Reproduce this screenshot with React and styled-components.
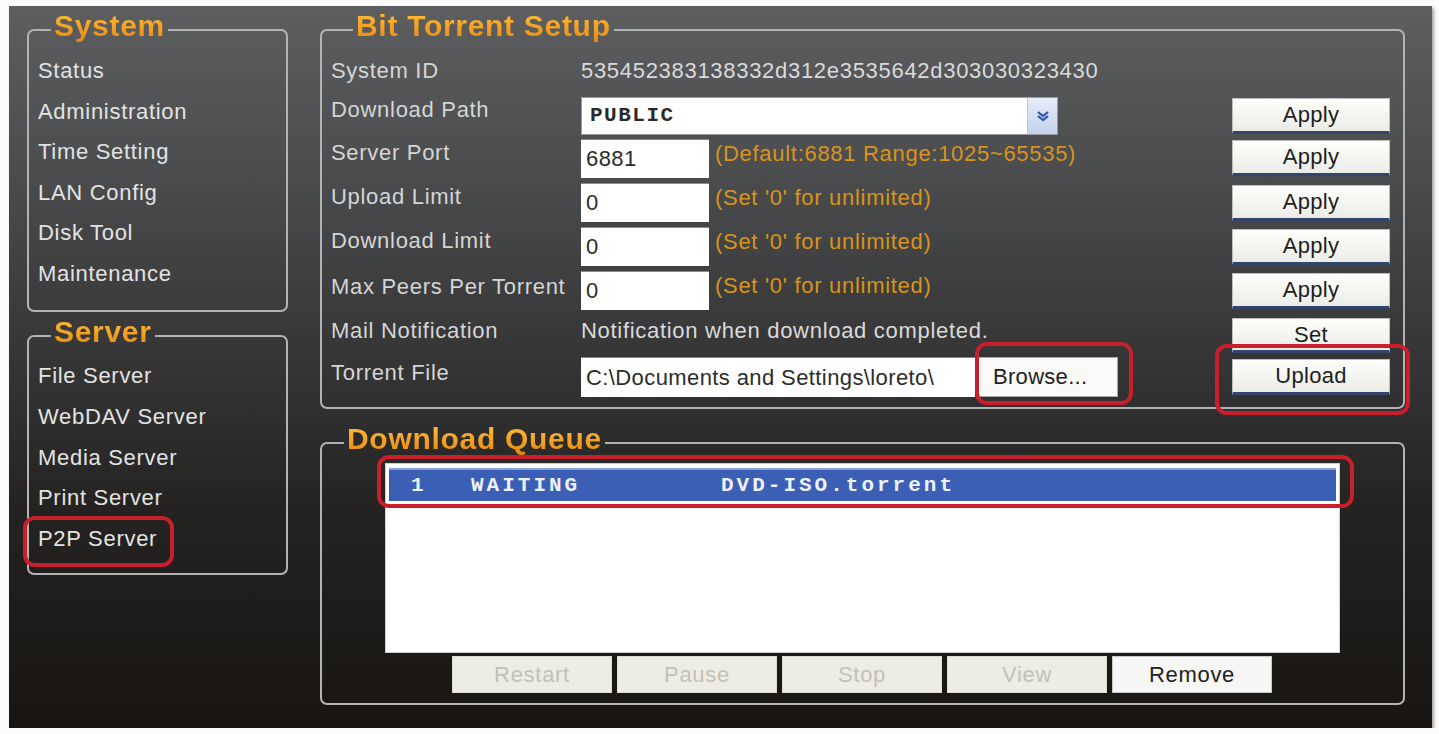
import React from "react";
import styled, { createGlobalStyle } from "styled-components";

const Global = createGlobalStyle`
  html, body {
    margin: 0;
    padding: 0;
    background: #fbfbfb;
  }
  body {
    font-family: "Liberation Sans", Arial, sans-serif;
  }
`;

const Panel = styled.div`
  box-sizing: border-box;
  width: 1423px;
  height: 722px;
  margin: 6px 0 0 9px;
  padding: 5px 27px 0 18px;
  display: flex;
  gap: 32px;
  background: linear-gradient(
    180deg,
    #5d5e60 0%,
    #4c4d4e 22%,
    #363637 48%,
    #242322 70%,
    #181512 100%
  );
  box-shadow: 2px 2px 3px rgba(0, 0, 0, 0.35);
  font-family: "Liberation Sans", Arial, sans-serif;
  letter-spacing: 0.7px;
`;

const Sidebar = styled.div`
  width: 261px;
  display: flex;
  flex-direction: column;
  gap: 5px;
`;

const Main = styled.div`
  flex: 1;
  display: flex;
  flex-direction: column;
  gap: 15px;
`;

const Group = styled.fieldset`
  margin: 0;
  min-width: 0;
  border: 2px solid #b3b3b3;
  border-radius: 7px;
  padding: ${(p) => p.$pad};
`;

const Legend = styled.legend`
  margin-left: ${(p) => p.$offset}px;
  padding: 0 3px 8px;
  font-size: 30px;
  line-height: 30px;
  font-weight: bold;
  letter-spacing: 0.7px;
  background: linear-gradient(180deg, #ffbd3c 0%, #f09a1c 55%, #d47e10 100%);
  -webkit-background-clip: text;
  background-clip: text;
  color: transparent;
`;

const Item = styled.div`
  padding-left: 9px;
  font-size: 22px;
  line-height: ${(p) => p.$lh}px;
  color: #e3e3e3;
  white-space: nowrap;
`;

const Marked = styled.span`
  position: relative;
  display: ${(p) => (p.$block ? "block" : "inline-block")};

  &::after {
    content: "";
    position: absolute;
    inset: ${(p) => p.$inset};
    border: 4px solid #c71f2b;
    border-radius: 12px;
    pointer-events: none;
  }
`;

const Row = styled.div`
  display: grid;
  grid-template-columns: 250px 1fr 158px;
  height: ${(p) => p.$h}px;
`;

const Label = styled.div`
  padding-top: ${(p) => p.$pt ?? 1}px;
  font-size: 22px;
  line-height: 28px;
  color: #d5d5d5;
  white-space: nowrap;
`;

const Value = styled.div`
  display: flex;
  align-items: flex-start;
  gap: ${(p) => p.$gap ?? 6}px;
  padding-top: ${(p) => p.$pt ?? 0}px;
  min-width: 0;
`;

const Plain = styled.div`
  padding-top: 1px;
  font-size: 22px;
  line-height: 28px;
  color: #dadada;
  white-space: nowrap;
`;

const Hint = styled(Plain)`
  color: #d8941c;
`;

const TextBox = styled.div`
  box-sizing: border-box;
  width: ${(p) => p.$w}px;
  height: ${(p) => p.$h ?? 39}px;
  padding: 0 5px;
  background: #fff;
  border-top: 1px solid #8a8a8a;
  font-size: 22px;
  line-height: ${(p) => (p.$h ?? 39) - 1}px;
  color: #2c2c2c;
  letter-spacing: 0.4px;
  white-space: nowrap;
  overflow: hidden;
`;

const Select = styled.div`
  box-sizing: border-box;
  width: 477px;
  height: 38px;
  margin-top: 2px;
  display: flex;
  background: #fff;
  border: 1px solid #9a9a9a;
`;

const SelectText = styled.div`
  flex: 1;
  padding-left: 8px;
  font-family: "Liberation Mono", "Courier New", monospace;
  font-weight: bold;
  font-size: 21px;
  line-height: 36px;
  letter-spacing: 1.5px;
  color: #2a2a2a;
`;

const Arrow = styled.div`
  width: 29px;
  display: flex;
  align-items: center;
  justify-content: center;
  background: linear-gradient(180deg, #e6edf9 0%, #c4d2ee 100%);
  border-left: 1px solid #b7c6e6;
`;

const Btn = styled.div`
  box-sizing: border-box;
  height: ${(p) => p.$h ?? 36}px;
  margin-top: ${(p) => p.$mt ?? 2}px;
  display: flex;
  align-items: center;
  justify-content: center;
  background: linear-gradient(180deg, #fdfdfb 0%, #ecece7 100%);
  border: 1px solid #bdbdbd;
  border-bottom: 3px solid #33456a;
  font-size: 22px;
  letter-spacing: 0.3px;
  color: #1e1e1e;
`;

const BrowseBtn = styled.div`
  box-sizing: border-box;
  width: 140px;
  height: 40px;
  padding-left: 14px;
  display: flex;
  align-items: center;
  background: #f9f9f7;
  border: 1px solid #a9a9a9;
  font-size: 22px;
  letter-spacing: 0.3px;
  color: #222;
`;

const ListBox = styled.div`
  box-sizing: border-box;
  width: 955px;
  height: 190px;
  margin: 0 auto;
  padding: 4px 3px 0;
  background: #fff;
  border: 1px solid #cfcfcf;
`;

const QueueRow = styled.div`
  box-sizing: border-box;
  height: 33px;
  padding-left: 22px;
  display: grid;
  grid-template-columns: 60px 250px 1fr;
  align-items: center;
  background: #3b5fb4;
  border-top: 2px solid #8ba3da;
  font-family: "Liberation Mono", "Courier New", monospace;
  font-weight: bold;
  font-size: 21px;
  letter-spacing: 3px;
  color: #eef2ff;
`;

const ButtonBar = styled.div`
  width: 955px;
  margin: 3px auto 0;
  padding-left: 67px;
  box-sizing: border-box;
  display: flex;
  gap: 5px;
`;

const QueueBtn = styled.div`
  box-sizing: border-box;
  width: 160px;
  height: 37px;
  display: flex;
  align-items: center;
  justify-content: center;
  background: ${(p) => (p.$disabled ? "#ededE3" : "#f6f6f4")};
  border: 1px solid ${(p) => (p.$disabled ? "#dcdcd2" : "#c8c8c8")};
  font-size: 22px;
  color: ${(p) => (p.$disabled ? "#c2c2b6" : "#222")};
`;

const systemItems = [
  "Status",
  "Administration",
  "Time Setting",
  "LAN Config",
  "Disk Tool",
  "Maintenance",
];

const serverItems = ["File Server", "WebDAV Server", "Media Server", "Print Server"];

const limits = [
  { label: "Upload Limit", pt: 0 },
  { label: "Download Limit", pt: 0 },
  { label: "Max Peers Per Torrent", pt: 2 },
];

const queueButtons = [
  { text: "Restart", disabled: true },
  { text: "Pause", disabled: true },
  { text: "Stop", disabled: true },
  { text: "View", disabled: true },
  { text: "Remove", disabled: false },
];

const Chevron = () => (
  <svg width="14" height="12" viewBox="0 0 14 12">
    <polyline points="2,2 7,6 12,2" fill="none" stroke="#2f55b0" strokeWidth="2.2" />
    <polyline points="2,6 7,10 12,6" fill="none" stroke="#2f55b0" strokeWidth="2.2" />
  </svg>
);

export default function App() {
  return (
    <>
      <Global />
      <Panel>
        <Sidebar>
          <Group $pad="2px 0 16px">
            <Legend $offset={22}>System</Legend>
            {systemItems.map((t) => (
              <Item key={t} $lh={40.5}>
                {t}
              </Item>
            ))}
          </Group>
          <Group $pad="1px 0 13px">
            <Legend $offset={22}>Server</Legend>
            {serverItems.map((t) => (
              <Item key={t} $lh={40.8}>
                {t}
              </Item>
            ))}
            <Item $lh={40.8}>
              <Marked $inset="-3px -17px -7px -15px">P2P Server</Marked>
            </Item>
          </Group>
        </Sidebar>

        <Main>
          <Group $pad="3px 13px 6px 9px">
            <Legend $offset={22}>Bit Torrent Setup</Legend>

            <Row $h={43}>
              <Label $pt={5}>System ID</Label>
              <Value $pt={4}>
                <Plain>535452383138332d312e3535642d303030323430</Plain>
              </Value>
              <div />
            </Row>

            <Row $h={44}>
              <Label>Download Path</Label>
              <Value>
                <Select>
                  <SelectText>PUBLIC</SelectText>
                  <Arrow>
                    <Chevron />
                  </Arrow>
                </Select>
              </Value>
              <Btn $h={36} $mt={3}>Apply</Btn>
            </Row>

            <Row $h={44}>
              <Label $pt={0}>Server Port</Label>
              <Value>
                <TextBox $w={128}>6881</TextBox>
                <Hint>(Default:6881 Range:1025~65535)</Hint>
              </Value>
              <Btn $mt={1}>Apply</Btn>
            </Row>

            {limits.map((l) => (
              <Row key={l.label} $h={44}>
                <Label $pt={l.pt}>{l.label}</Label>
                <Value>
                  <TextBox $w={128}>0</TextBox>
                  <Hint>(Set '0' for unlimited)</Hint>
                </Value>
                <Btn>Apply</Btn>
              </Row>
            ))}

            <Row $h={42}>
              <Label $pt={2}>Mail Notification</Label>
              <Value $pt={1}>
                <Plain>Notification when download completed.</Plain>
              </Value>
              <Btn $h={35} $mt={3}>Set</Btn>
            </Row>

            <Row $h={44}>
              <Label $pt={2}>Torrent File</Label>
              <Value $gap={3}>
                <TextBox $w={394} $h={40}>
                  C:\Documents and Settings\loreto\
                </TextBox>
                <Marked $inset="-15px -15px -8px -3px">
                  <BrowseBtn>Browse...</BrowseBtn>
                </Marked>
              </Value>
              <Marked $block $inset="-13px -20px -14px -17px">
                <Btn>Upload</Btn>
              </Marked>
            </Row>
          </Group>

          <Group $pad="1px 0 10px">
            <Legend $offset={22}>Download Queue</Legend>
            <ListBox>
              <Marked $block $inset="-13px -18px -7px -12px">
                <QueueRow>
                  <span>1</span>
                  <span>WAITING</span>
                  <span>DVD-ISO.torrent</span>
                </QueueRow>
              </Marked>
            </ListBox>
            <ButtonBar>
              {queueButtons.map((b) => (
                <QueueBtn key={b.text} $disabled={b.disabled}>
                  {b.text}
                </QueueBtn>
              ))}
            </ButtonBar>
          </Group>
        </Main>
      </Panel>
    </>
  );
}
